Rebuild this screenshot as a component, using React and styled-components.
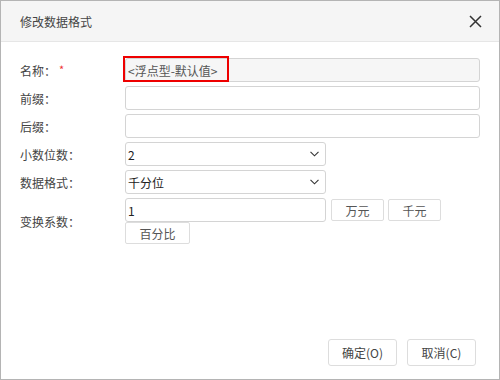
import React from "react"
import styled, { createGlobalStyle } from "styled-components"

const GlobalStyle = createGlobalStyle`
  html, body {
    margin: 0;
    padding: 0;
    background: #fff;
  }
  * {
    box-sizing: border-box;
  }
`

const Dialog = styled.div`
  display: flex;
  flex-direction: column;
  width: 500px;
  height: 380px;
  border: 1px solid #b4b4b4;
  background: #fff;
  font-family: "Noto Sans CJK SC", "Noto Sans", sans-serif;
  font-size: 12px;
  color: #333;
`

const Header = styled.div`
  display: flex;
  align-items: center;
  justify-content: space-between;
  height: 41px;
  padding: 0 17px 0 19px;
  background: #f5f5f5;
  border-bottom: 1px solid #e6e6e6;
`

const Title = styled.span`
  font-size: 12px;
  color: #444;
`

const Close = styled.button`
  display: flex;
  padding: 0;
  border: 0;
  background: none;
  cursor: pointer;
`

const Body = styled.div`
  flex: 1;
  padding: 16px 18px 0 19px;
`

const Form = styled.div`
  display: grid;
  grid-template-columns: 105px 1fr;
  row-gap: 4px;
  align-items: center;
`

const Label = styled.label`
  color: #444;
  white-space: nowrap;
`

const Required = styled.span`
  display: inline-block;
  margin-left: 3px;
  font-size: 11px;
  line-height: 1;
  vertical-align: 2px;
  color: #e33;
`

const FieldWrap = styled.div`
  position: relative;
  width: ${p => p.$width || "355px"};
`

const Input = styled.input`
  display: block;
  width: ${p => p.$width || "100%"};
  height: 24px;
  padding: 0 2px;
  border: 1px solid #d4d4d4;
  border-radius: 3px;
  background: ${p => (p.disabled ? "#f6f6f6" : "#fff")};
  font: inherit;
  color: ${p => (p.disabled ? "#555" : "#222")};
  outline: none;
`

const Highlight = styled.div`
  position: absolute;
  left: -2px;
  top: -2px;
  width: 106px;
  height: 26px;
  border: 2px solid #ee0000;
  pointer-events: none;
`

const Select = styled.div`
  display: flex;
  align-items: center;
  justify-content: space-between;
  width: 201px;
  height: 24px;
  padding: 0 6px 0 2px;
  border: 1px solid #d4d4d4;
  border-radius: 3px;
  color: #222;
`

const Factor = styled.div`
  display: flex;
  flex-wrap: wrap;
  align-items: center;
  column-gap: 4px;
  row-gap: 0;
  width: 355px;
`

const SmallButton = styled.button`
  width: ${p => p.$width}px;
  height: 22px;
  padding: 0;
  margin-left: ${p => p.$gap || 0}px;
  border: 1px solid #ddd;
  border-radius: 2px;
  background: #fff;
  font: inherit;
  color: #555;
`

const Footer = styled.div`
  display: flex;
  justify-content: flex-end;
  gap: 10px;
  padding: 0 23px 13px 0;
`

const Button = styled.button`
  width: 69px;
  height: 27px;
  padding: 0;
  border: 1px solid #ddd;
  border-radius: 3px;
  background: #fff;
  font: inherit;
  color: #444;
`

const Chevron = () => (
  <svg width="9" height="6" viewBox="0 0 9 6">
    <polyline points="0.5,0.8 4.5,4.8 8.5,0.8" fill="none" stroke="#333" strokeWidth="1.1" />
  </svg>
)

const App = () => (
  <>
    <GlobalStyle />
    <Dialog>
      <Header>
        <Title>修改数据格式</Title>
        <Close aria-label="关闭">
          <svg width="13" height="13" viewBox="0 0 13 13">
            <path d="M1 1 L12 12 M12 1 L1 12" stroke="#333" strokeWidth="1.5" />
          </svg>
        </Close>
      </Header>
      <Body>
        <Form>
          <Label>
            名称：<Required>*</Required>
          </Label>
          <FieldWrap>
            <Input disabled value="<浮点型-默认值>" readOnly />
            <Highlight />
          </FieldWrap>

          <Label>前缀：</Label>
          <FieldWrap>
            <Input />
          </FieldWrap>

          <Label>后缀：</Label>
          <FieldWrap>
            <Input />
          </FieldWrap>

          <Label>小数位数：</Label>
          <Select>
            <span>2</span>
            <Chevron />
          </Select>

          <Label>数据格式：</Label>
          <Select>
            <span>千分位</span>
            <Chevron />
          </Select>

          <Label>变换系数：</Label>
          <Factor>
            <Input $width="201px" defaultValue="1" />
            <SmallButton $width={53} $gap={1}>万元</SmallButton>
            <SmallButton $width={53}>千元</SmallButton>
            <SmallButton $width={65}>百分比</SmallButton>
          </Factor>
        </Form>
      </Body>
      <Footer>
        <Button>确定(O)</Button>
        <Button>取消(C)</Button>
      </Footer>
    </Dialog>
  </>
)

export default App
